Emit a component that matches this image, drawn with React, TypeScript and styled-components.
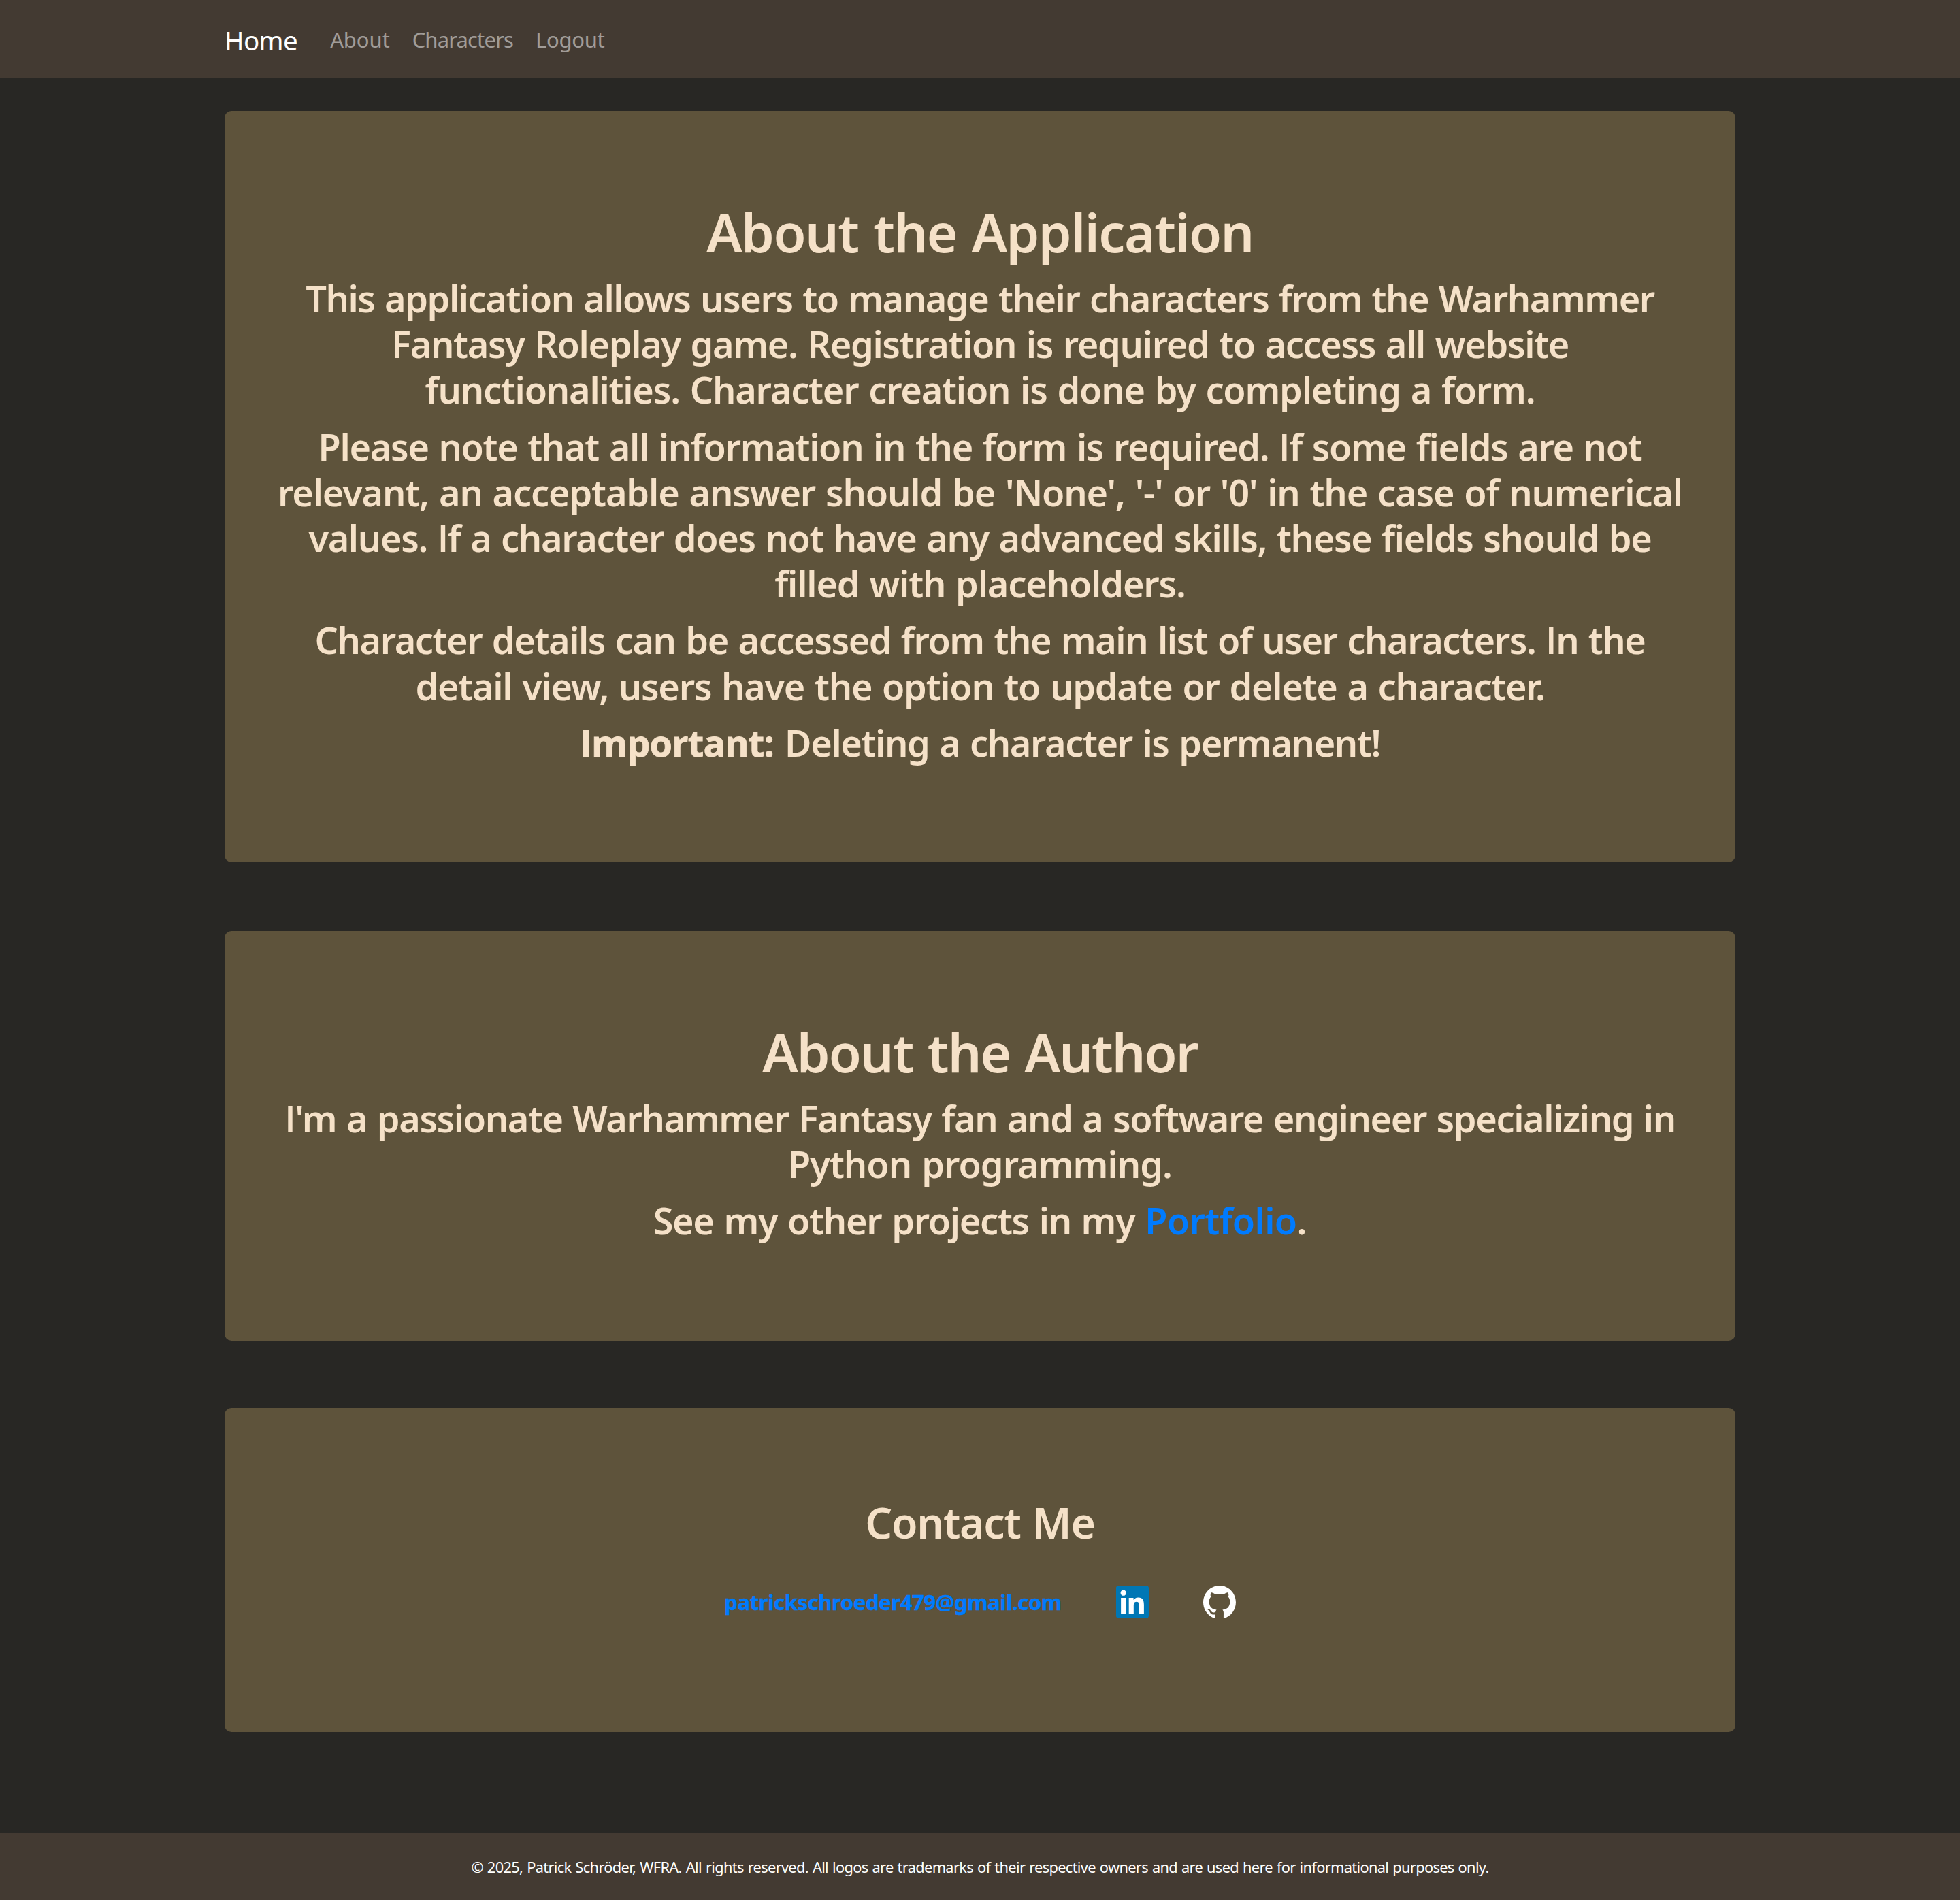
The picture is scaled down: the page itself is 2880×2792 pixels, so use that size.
import React from "react";
import styled, { createGlobalStyle } from "styled-components";

const GlobalStyle = createGlobalStyle`
  *, *::before, *::after { box-sizing: border-box; }
  body {
    margin: 0;
    background: #282724;
    color: #f5e1c8;
    font-family: "Noto Sans", "Open Sans", sans-serif;
    font-size: 31px;
  }
`;

const Page = styled.div`
  display: flex;
  flex-direction: column;
  min-height: 2792px;
`;

const Navbar = styled.nav`
  height: 115px;
  flex: none;
  background: #433a32;
`;

const Container = styled.div`
  width: 2220px;
  margin: 0 auto;
`;

const NavRow = styled(Container)`
  display: flex;
  align-items: center;
  height: 100%;
`;

const Brand = styled.a`
  margin-right: 48px;
  padding-top: 3px;
  color: #fff;
  font-size: 38.5px;
  letter-spacing: -0.6px;
  text-decoration: none;
`;

const NavList = styled.div`
  display: flex;
  gap: 33px;
`;

const NavLink = styled.a<{ $track: number }>`
  color: rgba(255, 255, 255, 0.5);
  letter-spacing: ${(p) => p.$track}px;
  text-decoration: none;
`;

const Main = styled(Container)`
  display: flex;
  flex: 1;
  flex-direction: column;
  padding-top: 48px;
`;

const Card = styled.section<{ $height: number; $gap?: number }>`
  display: flex;
  flex: none;
  flex-direction: column;
  align-items: center;
  height: ${(p) => p.$height}px;
  margin-bottom: ${(p) => p.$gap ?? 0}px;
  padding: 130px 64px 0;
  border-radius: 10px;
  background: #5e533b;
  font-weight: 600;
  text-align: center;
`;

const Title = styled.h1<{ $track: number }>`
  margin: 0 0 16px;
  font-size: 78px;
  font-weight: 600;
  line-height: 96px;
  letter-spacing: ${(p) => p.$track}px;
  word-spacing: 3px;
`;

const Subtitle = styled.h2`
  margin: 0;
  font-size: 62.5px;
  font-weight: 600;
  line-height: 76.8px;
  letter-spacing: -1.25px;
  word-spacing: 2px;
`;

const Paragraph = styled.h3`
  margin: 0 0 16px;
  font-size: 54px;
  font-weight: 600;
  line-height: 67.2px;
  white-space: nowrap;
  word-spacing: 2px;
`;

const Line = styled.span<{ $track: number }>`
  display: block;
  letter-spacing: ${(p) => p.$track}px;
`;

const Run = styled.span<{ $track: number }>`
  letter-spacing: ${(p) => p.$track}px;
`;

/* Capital I without serifs */
const PlainI = styled.span`
  font-family: "Open Sans", sans-serif;
  line-height: 1;
`;

const Strong = styled.strong`
  font-family: "Open Sans", sans-serif;
  font-weight: 700;
  line-height: 1;
  letter-spacing: -0.83px;
  -webkit-text-stroke: 0.8px currentColor;
`;

const Link = styled.a`
  color: #007bff;
  letter-spacing: -0.66px;
  text-decoration: none;
`;

const ContactRow = styled.div`
  display: flex;
  align-items: center;
  gap: 80px;
  height: 48px;
  margin-top: 54px;
`;

const MailLink = styled.a`
  color: #007bff;
  font-size: 31px;
  font-weight: 700;
  letter-spacing: -0.4px;
  -webkit-text-stroke: 0.4px currentColor;
  text-decoration: none;
`;

const IconLink = styled.a`
  display: block;
  width: 48px;
  height: 48px;

  svg { display: block; }
`;

const Footer = styled.footer`
  display: flex;
  flex: none;
  align-items: center;
  justify-content: center;
  height: 98px;
  padding-top: 1px;
  background: #433a32;
  color: #fff;
  font-size: 21.8px;
  letter-spacing: -0.67px;
  white-space: nowrap;
  word-spacing: 1px;
`;

const LinkedInLogo = () => (
  <svg width="48" height="48" viewBox="0 0 24 24" aria-hidden="true">
    <rect x="1" y="1" width="22" height="22" fill="#fff" />
    <path
      fill="#0077b5"
      d="M20.447 20.452h-3.554v-5.569c0-1.328-.027-3.037-1.852-3.037-1.853 0-2.136 1.445-2.136 2.939v5.667H9.351V9h3.414v1.561h.046c.477-.9 1.637-1.85 3.37-1.85 3.601 0 4.267 2.37 4.267 5.455v6.286zM5.337 7.433a2.062 2.062 0 0 1-2.063-2.065 2.064 2.064 0 1 1 2.063 2.065zm1.782 13.019H3.555V9h3.564v11.452zM22.225 0H1.771C.792 0 0 .774 0 1.729v20.542C0 23.227.792 24 1.771 24h20.451C23.2 24 24 23.227 24 22.271V1.729C24 .774 23.2 0 22.222 0h.003z"
    />
  </svg>
);

const GitHubLogo = () => (
  <svg width="48" height="48" viewBox="0 0 97.7 96" preserveAspectRatio="none" aria-hidden="true">
    <path
      fill="#fff"
      fillRule="evenodd"
      clipRule="evenodd"
      d="M48.854 0C21.839 0 0 22 0 49.217c0 21.756 13.993 40.172 33.405 46.69 2.427.49 3.316-1.059 3.316-2.362 0-1.141-.08-5.052-.08-9.127-13.59 2.934-16.42-5.867-16.42-5.867-2.184-5.704-5.42-7.17-5.42-7.17-4.448-3.015.324-3.015.324-3.015 4.934.326 7.523 5.052 7.523 5.052 4.367 7.496 11.404 5.378 14.235 4.074.404-3.178 1.699-5.378 3.074-6.6-10.839-1.141-22.243-5.378-22.243-24.283 0-5.378 1.94-9.778 5.014-13.2-.485-1.222-2.184-6.275.486-13.038 0 0 4.125-1.304 13.426 5.052a46.97 46.97 0 0 1 12.214-1.63c4.125 0 8.33.571 12.213 1.63 9.302-6.356 13.427-5.052 13.427-5.052 2.67 6.763.97 11.816.485 13.038 3.155 3.422 5.015 7.822 5.015 13.2 0 18.905-11.404 23.06-22.324 24.283 1.78 1.548 3.316 4.481 3.316 9.126 0 6.6-.08 11.897-.08 13.526 0 1.304.89 2.853 3.316 2.364 19.412-6.52 33.405-24.935 33.405-46.691C97.707 22 75.788 0 48.854 0z"
    />
  </svg>
);

export default function App() {
  return (
    <Page>
      <GlobalStyle />
      <Navbar>
        <NavRow>
          <Brand>Home</Brand>
          <NavList>
            <NavLink $track={-0.1}>About</NavLink>
            <NavLink $track={-0.85}>Characters</NavLink>
            <NavLink $track={-0.3}>Logout</NavLink>
          </NavList>
        </NavRow>
      </Navbar>

      <Main as="main">
        <Card $height={1104} $gap={101}>
          <Title $track={-1.5}>About the Application</Title>
          <Paragraph>
            <Line $track={-1.44}>This application allows users to manage their characters from the Warhammer</Line>
            <Line $track={-1.33}>Fantasy Roleplay game. Registration is required to access all website</Line>
            <Line $track={-1.2}>functionalities. Character creation is done by completing a form.</Line>
          </Paragraph>
          <Paragraph>
            <Line $track={-1.3}>
              Please note that all information in the form is required. <PlainI>I</PlainI>f some fields are not
            </Line>
            <Line $track={-1.14}>
              relevant, an acceptable answer should be 'None', '-' or '0' in the case of numerical
            </Line>
            <Line $track={-1.35}>
              values. <PlainI>I</PlainI>f a character does not have any advanced skills, these fields should be
            </Line>
            <Line $track={-1.16}>filled with placeholders.</Line>
          </Paragraph>
          <Paragraph>
            <Line $track={-1.41}>
              Character details can be accessed from the main list of user characters. <PlainI>I</PlainI>n the
            </Line>
            <Line $track={-1.25}>detail view, users have the option to update or delete a character.</Line>
          </Paragraph>
          <Paragraph>
            <Strong>Important:</Strong> <Run $track={-1.38}>Deleting a character is permanent!</Run>
          </Paragraph>
        </Card>

        <Card $height={602} $gap={99}>
          <Title $track={-1.9}>About the Author</Title>
          <Paragraph>
            <Line $track={-1.39}>
              <PlainI>I</PlainI>'m a passionate Warhammer Fantasy fan and a software engineer specializing in
            </Line>
            <Line $track={-0.97}>Python programming.</Line>
          </Paragraph>
          <Paragraph>
            <Run $track={-1.28}>See my other projects in my </Run>
            <Link>Portfolio</Link>.
          </Paragraph>
        </Card>

        <Card $height={476}>
          <Subtitle>Contact Me</Subtitle>
          <ContactRow>
            <MailLink>patrickschroeder479@gmail.com</MailLink>
            <IconLink aria-label="LinkedIn">
              <LinkedInLogo />
            </IconLink>
            <IconLink aria-label="GitHub">
              <GitHubLogo />
            </IconLink>
          </ContactRow>
        </Card>
      </Main>

      <Footer>
        © 2025, Patrick Schröder, WFRA. All rights reserved. All logos are trademarks of their respective owners and
        are used here for informational purposes only.
      </Footer>
    </Page>
  );
}
